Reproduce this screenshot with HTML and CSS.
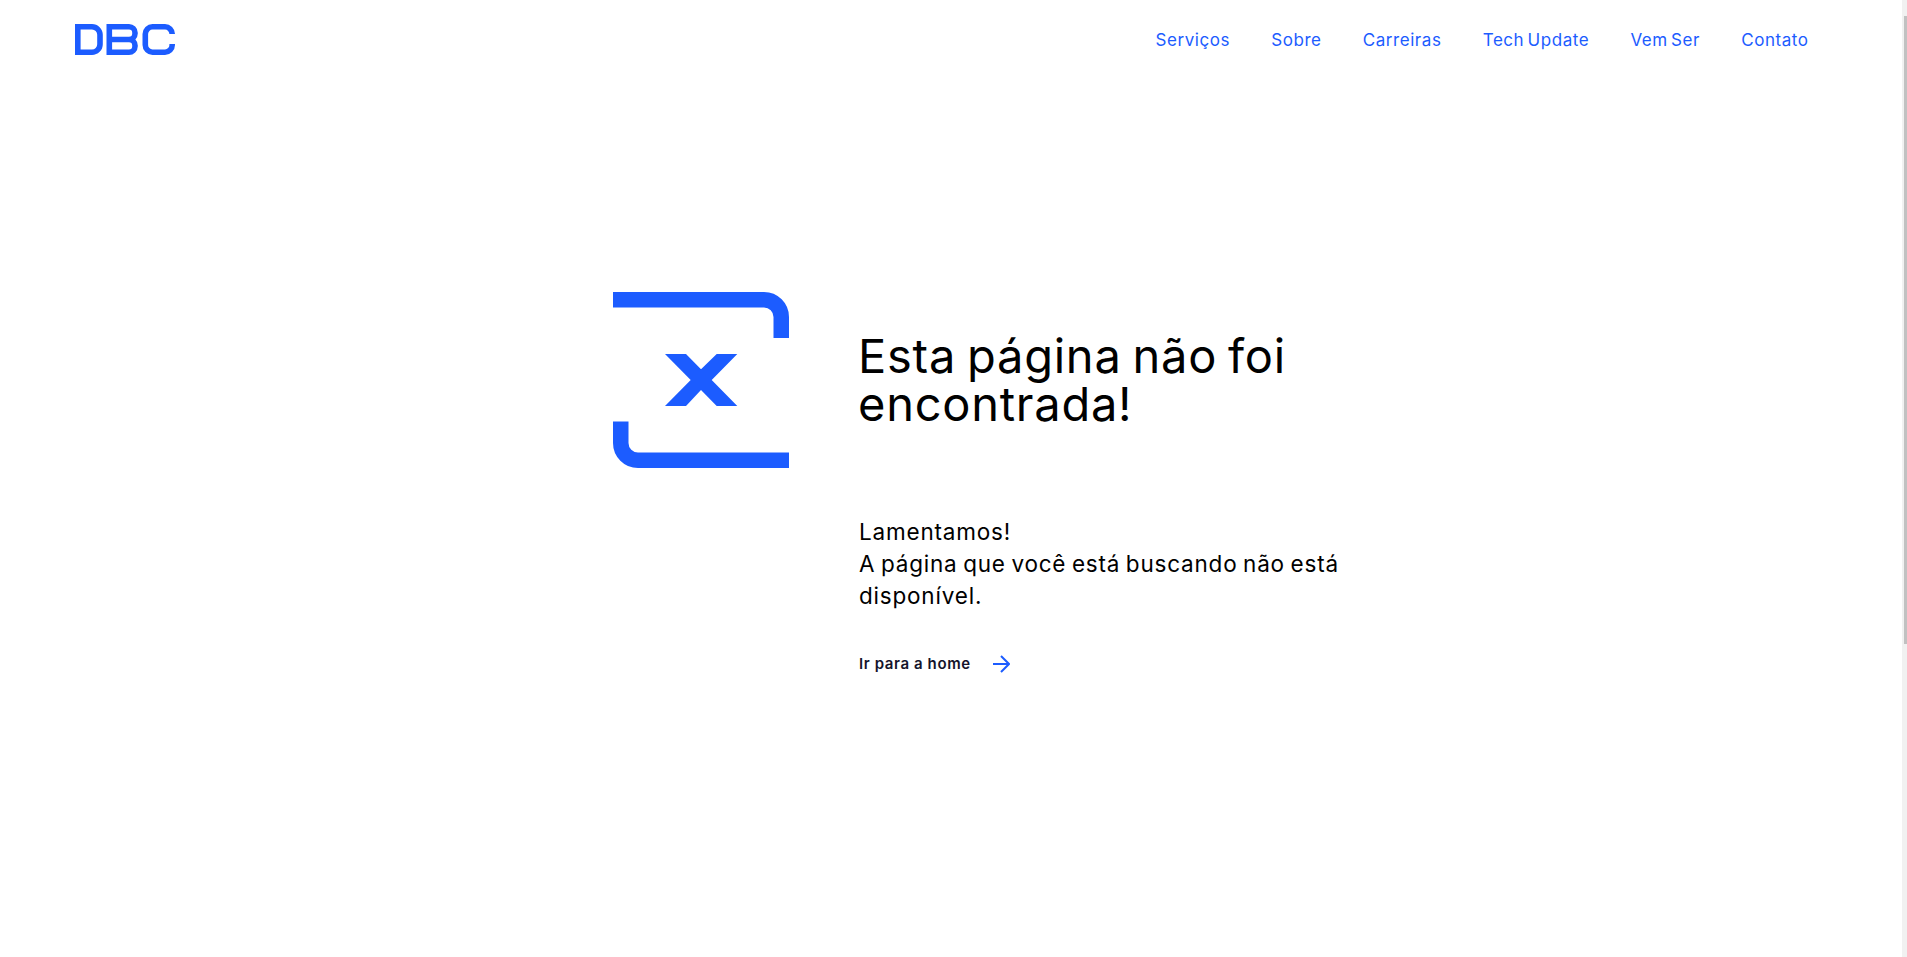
FILE: index.html
```html
<!DOCTYPE html>
<html lang="pt-BR">
<head>
<meta charset="utf-8">
<title>DBC</title>
<link rel="stylesheet" href="styles.css">
</head>
<body>
<header class="header">
  <a class="logo" href="#" aria-label="DBC">
    <svg width="100" height="31" viewBox="0 0 100 31" fill="none" stroke="#1c5cff" stroke-width="5.600">
      <path d="M2.800 2.800H17a8 8 0 0 1 8 8v9.400a8 8 0 0 1-8 8H2.800Z"/>
      <path d="M34.300 0V31M34.300 2.800H54a6 6 0 0 1 6 6v.7a6 6 0 0 1-6 6H34.300M54 15.500a6 6 0 0 1 6 6v.7a6 6 0 0 1-6 6H34.300"/>
      <path d="M97.200 10V10a7.200 7.200 0 0 0-7.200-7.200H77.500a7.200 7.200 0 0 0-7.200 7.200v11a7.200 7.200 0 0 0 7.200 7.200H90a7.200 7.200 0 0 0 7.200-7.200V20"/>
    </svg>
  </a>
  <nav class="nav">
    <a href="#">Serviços</a>
    <a href="#">Sobre</a>
    <a href="#">Carreiras</a>
    <a href="#">Tech Update</a>
    <a href="#">Vem Ser</a>
    <a href="#">Contato</a>
  </nav>
</header>
<main class="main">
  <svg class="mark" width="176" height="176" viewBox="0 0 176 176" fill="none" aria-hidden="true">
    <path d="M0 7.750H151a17.250 17.250 0 0 1 17.250 17.250V46M7.750 129.500V151a17.250 17.250 0 0 0 17.250 17.250H176" stroke="#1c5cff" stroke-width="15.500"/>
    <path d="M52 62H73L88 77.300 103.700 62H124.300L98.700 88 124.300 114H103.700L88 98 73 114H52L77.700 88Z" fill="#1c5cff"/>
  </svg>
  <section class="copy">
    <h1 class="title">Esta página não foi encontrada!</h1>
    <p class="text">Lamentamos!<br>A página que você está buscando não está disponível.</p>
    <a class="home" href="#">Ir para a home
      <svg width="17" height="18" viewBox="0 0 17 18" fill="none" stroke="#1c5cff" stroke-width="2"><path d="M0 9H16M8 1l8 8-8 8"/></svg>
    </a>
  </section>
</main>
<div class="scrollbar"><div class="thumb"></div></div>
</body>
</html>
```
FILE: styles.css
```css
html, body {
  margin: 0;
  height: 100%;
  overflow: hidden;
  background: #fff;
}
body {
  font-family: Inter, "Liberation Sans", sans-serif;
  color: #000;
  padding-right: 5px;
  box-sizing: border-box;
}
a { text-decoration: none; }
.header {
  display: flex;
  justify-content: space-between;
  align-items: center;
  height: 78px;
  padding: 0 93.500px 0 75px;
}
.logo { display: flex; }
.nav {
  display: flex;
  gap: 41.250px;
  padding-top: 1px;
}
.nav a {
  color: #1c5cff;
  font-size: 17px;
  letter-spacing: 0.550px;
  word-spacing: -2px;
  line-height: 20px;
}
.main {
  display: flex;
  gap: 70px;
  padding: 214px 0 0 613px;
}
.mark { flex: none; }
.copy {
  width: 500px;
  padding-top: 40px;
}
.title {
  margin: 0 0 0 -1px;
  font-size: 47px;
  letter-spacing: 0.750px;
  word-spacing: -3px;
  line-height: 48px;
  font-weight: 400;
  width: 450px;
}
.text {
  margin: 88px 0 0;
  font-size: 22.500px;
  letter-spacing: 0.800px;
  word-spacing: -1.500px;
  line-height: 32px;
}
.home {
  display: flex;
  align-items: center;
  gap: 22px;
  margin-top: 41.500px;
  color: #14142b;
  font-size: 15px;
  letter-spacing: 0.600px;
  font-weight: 600;
  line-height: 20px;
}
.scrollbar {
  position: fixed;
  top: 0;
  right: 0;
  bottom: 0;
  width: 5px;
  background: #f1f1f1;
}
.thumb {
  position: absolute;
  top: 16px;
  left: 2px;
  right: 0;
  height: 628px;
  background: #c1c1c1;
}
```
